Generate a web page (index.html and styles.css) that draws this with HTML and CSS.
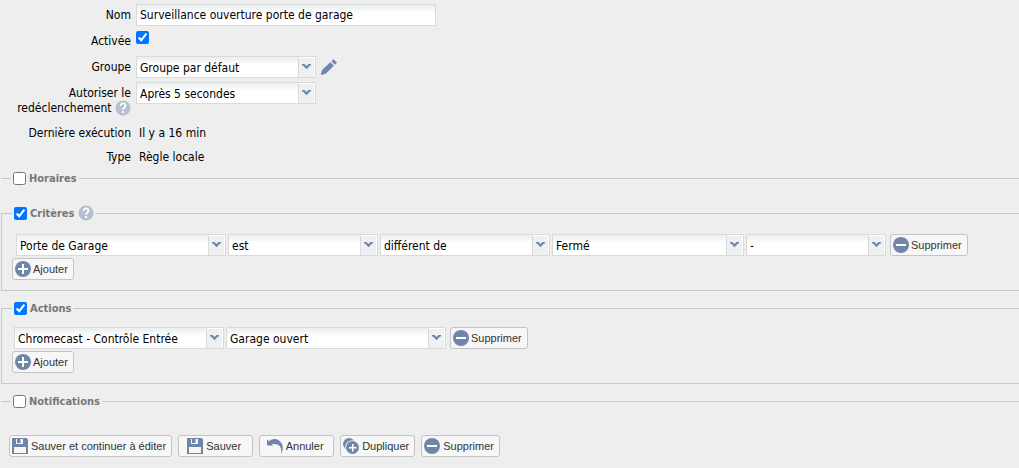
FILE: index.html
```html
<!DOCTYPE html>
<html lang="fr">
<head>
<meta charset="utf-8">
<title>Règle</title>
<link rel="stylesheet" href="styles.css">
</head>
<body>
<svg class="sprite" aria-hidden="true">
  <symbol id="chevron" viewBox="0 0 9 6"><path d="M0 0h2.500l2 2 2-2H9v1.500H8L4.500 5.200 1 1.500H0z"/></symbol>
  <symbol id="plus" viewBox="0 0 16 16"><circle cx="8" cy="8" r="8"/><path fill="#fff" d="M7 3h2v4h4v2H9v4H7V9H3V7h4z"/></symbol>
  <symbol id="minus" viewBox="0 0 16 16"><circle cx="8" cy="8" r="8"/><path fill="#fff" d="M3 7h10v2H3z"/></symbol>
  <symbol id="disk" viewBox="0 0 16 16"><path fill-rule="evenodd" d="M0 0h14.500L16 1.500V16H0zM4 1v5h8V1zM2 9v6h12V9z"/><path d="M5 1h3.500v4H5zM11 1h1v5h-1z"/></symbol>
  <symbol id="undo" viewBox="0 0 16 16"><path d="M0 1.500l2 1.800C5 .5 9 .3 12 2.500c4 3 5 8.500 2 13.500 1-5-.5-8.500-3.500-9.500C8.500 5.800 6.500 5.800 4.800 6.200L6.300 7.600H0z"/></symbol>
  <symbol id="copy" viewBox="0 0 16 16"><circle cx="6" cy="6" r="6"/><circle cx="9.500" cy="9.500" r="7.300" fill="#f7f7f7"/><circle cx="9.500" cy="9.500" r="6.500"/><path fill="#fff" d="M9 6h1.500v3h3v1.500h-3v3H9v-3H6V9h3z"/></symbol>
  <symbol id="pencil" viewBox="0 0 16 16"><path d="M0 16c0-2 .5-4 1.500-5.500L9.300 3.200l3.500 3.500L5.500 14C4 15.200 2 15.800 0 16zM10.300 2.300L11.500 1l1-.8L16 3.500l-1 1-1.200 1.300z"/></symbol>
  <symbol id="help" viewBox="0 0 16 16"><circle cx="8" cy="8" r="7.500" fill="#b4bfd2"/><path d="M5.500 6c0-3.500 5-3.200 5-.3 0 1.800-2.500 1.800-2.500 4" fill="none" stroke="#fff" stroke-width="1.800"/><path fill="#fff" d="M7 11h2v2H7z"/></symbol>
</svg>
<form>
  <div class="fields">
    <label class="name" for="nom">Nom</label>
    <div class="value"><input class="text" id="nom" type="text" value="Surveillance ouverture porte de garage"></div>
    <label class="name" for="active">Activée</label>
    <div class="value"><input class="tick" id="active" type="checkbox" checked></div>
    <label class="name" for="groupe">Groupe</label>
    <div class="value"><span class="combo w180"><select id="groupe"><option>Groupe par défaut</option></select><span class="trigger"><svg><use href="#chevron"/></svg></span></span><button class="edit" type="button" aria-label="Modifier le groupe"><svg class="icon"><use href="#pencil"/></svg></button></div>
    <label class="name" for="delai">Autoriser le redéclenchement <svg class="icon help"><use href="#help"/></svg></label>
    <div class="value"><span class="combo w180"><select id="delai"><option>Après 5 secondes</option></select><span class="trigger"><svg><use href="#chevron"/></svg></span></span></div>
    <span class="name">Dernière exécution</span>
    <div class="value plain">Il y a 16 min</div>
    <span class="name">Type</span>
    <div class="value plain">Règle locale</div>
  </div>

  <fieldset class="section closed">
    <legend><label><input class="tick" type="checkbox"><span>Horaires</span></label></legend>
  </fieldset>

  <fieldset class="section">
    <legend><label><input class="tick" type="checkbox" checked><span>Critères</span></label><svg class="icon help"><use href="#help"/></svg></legend>
    <div class="row criteria">
      <span class="combo w210"><select aria-label="Appareil"><option>Porte de Garage</option></select><span class="trigger"><svg><use href="#chevron"/></svg></span></span>
      <span class="combo w150"><select aria-label="Verbe"><option>est</option></select><span class="trigger"><svg><use href="#chevron"/></svg></span></span>
      <span class="combo w170"><select aria-label="Comparaison"><option>différent de</option></select><span class="trigger"><svg><use href="#chevron"/></svg></span></span>
      <span class="combo w192"><select aria-label="État"><option>Fermé</option></select><span class="trigger"><svg><use href="#chevron"/></svg></span></span>
      <span class="combo w140"><select aria-label="Durée"><option>-</option></select><span class="trigger"><svg><use href="#chevron"/></svg></span></span>
      <button class="btn after" type="button"><svg class="icon"><use href="#minus"/></svg>Supprimer</button>
    </div>
    <button class="btn" type="button"><svg class="icon"><use href="#plus"/></svg>Ajouter</button>
  </fieldset>

  <fieldset class="section">
    <legend><label><input class="tick" type="checkbox" checked><span>Actions</span></label></legend>
    <div class="row">
      <span class="combo w210"><select aria-label="Action"><option>Chromecast - Contrôle Entrée</option></select><span class="trigger"><svg><use href="#chevron"/></svg></span></span>
      <span class="combo w220"><select aria-label="Message"><option>Garage ouvert</option></select><span class="trigger"><svg><use href="#chevron"/></svg></span></span>
      <button class="btn after" type="button"><svg class="icon"><use href="#minus"/></svg>Supprimer</button>
    </div>
    <button class="btn" type="button"><svg class="icon"><use href="#plus"/></svg>Ajouter</button>
  </fieldset>

  <fieldset class="section closed">
    <legend><label><input class="tick" type="checkbox"><span>Notifications</span></label></legend>
  </fieldset>

  <div class="toolbar">
    <button class="btn" type="submit"><svg class="icon"><use href="#disk"/></svg>Sauver et continuer à éditer</button>
    <button class="btn" type="submit"><svg class="icon"><use href="#disk"/></svg>Sauver</button>
    <button class="btn" type="button"><svg class="icon"><use href="#undo"/></svg>Annuler</button>
    <button class="btn" type="button"><svg class="icon"><use href="#copy"/></svg>Dupliquer</button>
    <button class="btn" type="button"><svg class="icon"><use href="#minus"/></svg>Supprimer</button>
  </div>
</form>
</body>
</html>
```
FILE: styles.css
```css
* { box-sizing: border-box; }
body {
  margin: 0;
  background: #eee;
  color: #000;
  font: 12px/14px Tahoma, "DejaVu Sans Condensed", "Noto Sans", sans-serif;
}
.sprite { display: none; }
.icon { width: 16px; height: 16px; fill: #6f86a8; flex: none; }

.fields {
  display: grid;
  grid-template-columns: 131px 1fr;
  grid-template-rows: 26px 26px 26px 40px 24px 24px;
  column-gap: 5px;
  padding-top: 4px;
}
.name { text-align: right; padding-top: 4px; }
.value { display: flex; align-items: flex-start; }
.plain { padding: 4px 3px 0; }
.help { vertical-align: middle; }

.text, .combo {
  height: 22px;
  border: 1px solid #d9dbdb;
  background: linear-gradient(#e9eeee, #fff 8px);
}
.text { width: 300px; padding: 0 3px; font: inherit; color: inherit; }
.combo { position: relative; display: flex; flex: none; }
.combo select {
  appearance: none;
  width: 100%;
  border: 0;
  padding: 1px 20px 0 3px;
  background: transparent;
  font: inherit;
  color: inherit;
}
.trigger {
  position: absolute;
  top: 0;
  right: 0;
  bottom: 0;
  width: 17px;
  display: flex;
  justify-content: center;
  padding-top: 6px;
  border: 1px solid #fff;
  border-left-color: #d9dbdb;
  border-bottom: 0;
  background: #f0f0f2;
  pointer-events: none;
}
.trigger svg { width: 9px; height: 6px; fill: #6f86a8; }
.w140 { width: 140px; }
.w150 { width: 150px; }
.w170 { width: 170px; }
.w180 { width: 180px; }
.w192 { width: 192px; }
.w210 { width: 210px; }
.w220 { width: 220px; }

.tick { width: 13px; height: 13px; margin: 1px 0 0; flex: none; }
.edit { margin: 3px 0 0 5px; padding: 0; border: 0; background: none; display: flex; }

.section {
  min-width: 0;
  margin: 0 0 9px 1px;
  padding: 11px 0 10px 10px;
  border: 1px solid #c8c8c8;
  border-right: 0;
}
.section.closed {
  padding: 0 0 0 10px;
  margin-bottom: 19px;
  border-width: 1px 0 0;
}
legend {
  display: flex;
  align-items: center;
  gap: 4px;
  height: 16px;
  padding: 0 2px;
  color: #777;
  font-size: 11px;
  font-weight: bold;
}
legend label { display: flex; align-items: center; gap: 3px; }
legend .tick { margin: 0; }
legend span { padding-top: 2px; }
.row { display: flex; gap: 2px; margin: 0 0 2px 2px; }
.criteria { margin: 2px 0 2px 4px; }

.btn {
  display: flex;
  align-items: center;
  justify-content: center;
  gap: 2px;
  height: 22px;
  padding: 0 5px 0 2px;
  border: 1px solid #c4c4c4;
  border-radius: 3px;
  background: #f7f7f7;
  color: #333;
  font: 11px/14px Arial, "Liberation Sans", sans-serif;
  white-space: nowrap;
}
.after { margin-left: 2px; }
.toolbar { display: flex; flex-wrap: wrap; gap: 6px; padding: 7px 9px; }
.toolbar .btn { min-width: 75px; gap: 3px; }
```
